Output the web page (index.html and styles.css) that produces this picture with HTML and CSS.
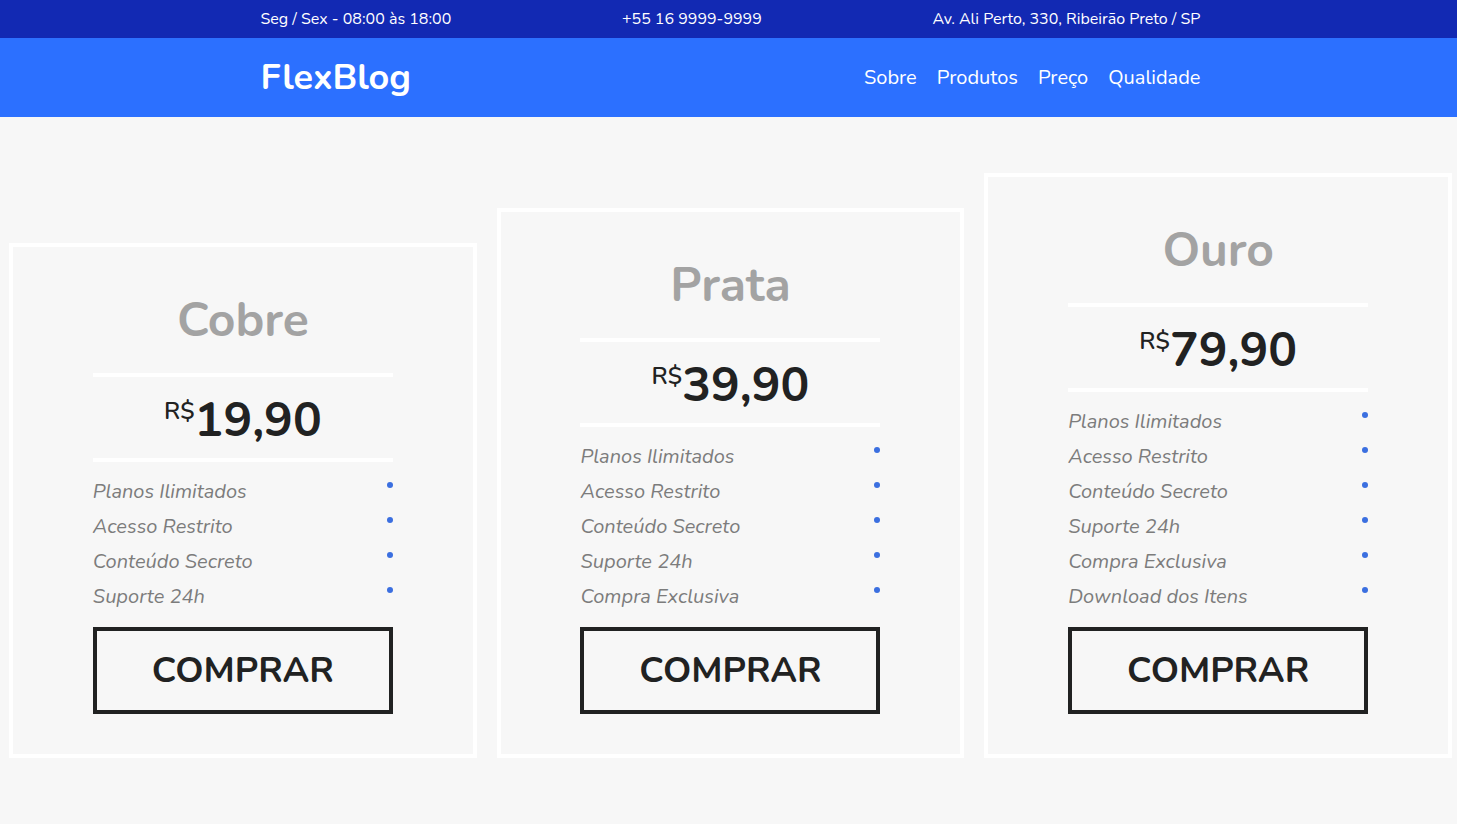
FILE: index.html
```html
<!DOCTYPE html>
<html lang="pt-BR">
<head>
  <meta charset="utf-8">
  <meta name="viewport" content="width=device-width, initial-scale=1">
  <title>FlexBlog</title>
  <link rel="stylesheet" href="styles.css">
</head>
<body>
  <div class="topbar">
    <div class="container">
      <span>Seg / Sex - 08:00 às 18:00</span>
      <span>+55 16 9999-9999</span>
      <span>Av. Ali Perto, 330, Ribeirão Preto / SP</span>
    </div>
  </div>
  <header class="header">
    <div class="container">
      <a class="logo" href="#">FlexBlog</a>
      <nav class="menu">
        <a href="#sobre">Sobre</a>
        <a href="#produtos">Produtos</a>
        <a href="#preco">Preço</a>
        <a href="#qualidade">Qualidade</a>
      </nav>
    </div>
  </header>
  <main class="plans" id="preco">
    <section class="plan">
      <div class="plan-body">
        <h2>Cobre</h2>
        <p class="price"><span class="currency">R$</span>19,90</p>
        <ul class="features">
          <li>Planos Ilimitados</li>
          <li>Acesso Restrito</li>
          <li>Conteúdo Secreto</li>
          <li>Suporte 24h</li>
        </ul>
        <button class="buy" type="button">COMPRAR</button>
      </div>
    </section>
    <section class="plan">
      <div class="plan-body">
        <h2>Prata</h2>
        <p class="price"><span class="currency">R$</span>39,90</p>
        <ul class="features">
          <li>Planos Ilimitados</li>
          <li>Acesso Restrito</li>
          <li>Conteúdo Secreto</li>
          <li>Suporte 24h</li>
          <li>Compra Exclusiva</li>
        </ul>
        <button class="buy" type="button">COMPRAR</button>
      </div>
    </section>
    <section class="plan">
      <div class="plan-body">
        <h2>Ouro</h2>
        <p class="price"><span class="currency">R$</span>79,90</p>
        <ul class="features">
          <li>Planos Ilimitados</li>
          <li>Acesso Restrito</li>
          <li>Conteúdo Secreto</li>
          <li>Suporte 24h</li>
          <li>Compra Exclusiva</li>
          <li>Download dos Itens</li>
        </ul>
        <button class="buy" type="button">COMPRAR</button>
      </div>
    </section>
  </main>
</body>
</html>
```
FILE: styles.css
```css
* {
  box-sizing: border-box;
}

body {
  margin: 0;
  background: #f7f7f7;
  color: #212222;
  font-family: Nunito, Lato, sans-serif;
}

h2,
p,
ul {
  margin: 0;
  padding: 0;
}

a {
  color: inherit;
  text-decoration: none;
}

.topbar,
.header {
  padding-left: 4px;
  color: #fff;
}

.topbar {
  background: #1229b3;
  font-size: 16px;
  font-weight: 400;
  line-height: 38px;
}

.header {
  background: #2c70ff;
}

.container {
  display: flex;
  flex-wrap: wrap;
  align-items: center;
  justify-content: space-between;
  max-width: 940px;
  margin: 0 auto;
}

.logo {
  font-size: 36px;
  font-weight: 700;
  line-height: 79px;
}

.menu {
  display: flex;
  gap: 20px;
  font-size: 20px;
  font-weight: 400;
}

.plans {
  display: grid;
  grid-template-columns: repeat(3, 1fr);
  align-items: end;
  gap: 20px;
  padding: 56px 5px 65px 9px;
}

.plan {
  padding: 40px 20px;
  border: 4px solid #fff;
}

.plan-body {
  max-width: 300px;
  margin: 0 auto;
}

.plan h2 {
  margin-bottom: 20px;
  color: #a3a3a3;
  font-size: 48px;
  font-weight: 700;
  line-height: 66px;
  text-align: center;
}

.price {
  display: flex;
  justify-content: center;
  padding: 9px 0 3px;
  border-top: 4px solid #fff;
  border-bottom: 4px solid #fff;
  font-size: 48px;
  font-weight: 700;
  line-height: 69px;
}

.currency {
  font-size: 24px;
  font-weight: 600;
  line-height: 50px;
}

.features {
  margin: 12px 0 13px;
  color: #7c7c7c;
  font-size: 20px;
  font-style: italic;
  font-weight: 400;
  line-height: 35px;
  list-style: none;
}

.features li {
  display: flex;
  justify-content: space-between;
}

.features li::after {
  content: "";
  width: 6px;
  height: 6px;
  margin-top: 8px;
  border-radius: 50%;
  background: #3b6fe0;
}

.buy {
  display: block;
  width: 100%;
  padding: 0;
  border: 4px solid #212222;
  background: transparent;
  color: inherit;
  font-family: inherit;
  font-size: 36px;
  font-weight: 700;
  line-height: 79px;
  cursor: pointer;
}

@media (max-width: 1000px) {
  .plans {
    grid-template-columns: 1fr;
  }
}
```
